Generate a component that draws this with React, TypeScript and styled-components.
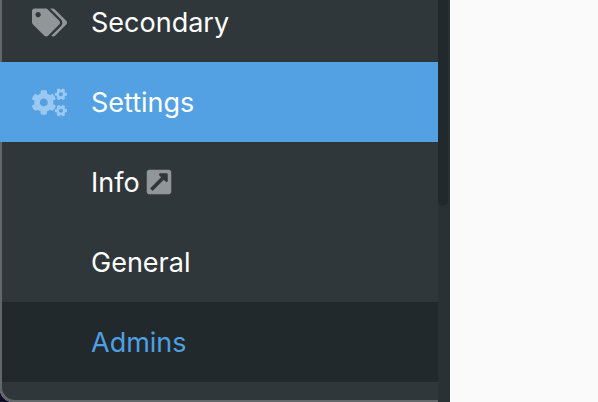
import React from 'react';
import styled, { createGlobalStyle } from 'styled-components';
import { FaTags, FaCogs, FaExternalLinkSquareAlt } from 'react-icons/fa';

const GlobalStyle = createGlobalStyle`
    html, body {
        margin: 0;
        padding: 0;
        width: 598px;
        height: 402px;
        overflow: hidden;
        background: #0d0d24;
    }
`;

const Window = styled.div`
    display: flex;
    width: 598px;
    height: 402px;
    overflow: hidden;
    border-bottom-left-radius: 13px;
    background: #fafafa;
    font-family: Inter, 'Liberation Sans', sans-serif;
`;

const Sidebar = styled.aside`
    display: flex;
    flex: 0 0 450px;
    height: 402px;
    overflow: hidden;
    background: #30373b;
    box-shadow: inset 2px -2px 0 #62676a;
    border-bottom-left-radius: 13px;
`;

const Menu = styled.ul`
    flex: 1;
    margin: -18px 0 0;
    padding: 0;
    list-style: none;
`;

const Item = styled.li<{ $state?: 'active' | 'current' }>`
    display: flex;
    align-items: center;
    height: 80px;
    margin-left: ${({ $state }) => ($state === 'active' ? '0' : '2px')};
    padding-left: ${({ $state }) => ($state === 'active' ? '32px' : '30px')};
    box-sizing: border-box;
    font-size: 27px;
    color: ${({ $state }) => ($state === 'current' ? '#4fa0e2' : '#fff')};
    background: ${({ $state }) =>
        $state === 'active' ? '#53a1e2' : $state === 'current' ? '#22292d' : 'transparent'};
`;

const IconSlot = styled.span<{ $tint?: string }>`
    display: flex;
    flex: 0 0 59px;
    color: ${({ $tint }) => $tint ?? 'inherit'};
`;

const LinkMark = styled.span`
    display: flex;
    margin-left: 5px;
    color: #919699;
`;

const Track = styled.div`
    flex: 0 0 12px;
    background: #2a3135;
`;

const Thumb = styled.div`
    height: 206px;
    width: 10px;
    background: #22292d;
    border-radius: 0 0 6px 6px;
`;

const Content = styled.main`
    flex: 1;
    background: #fafafa;
`;

const App = () => (
    <>
        <GlobalStyle />
        <Window>
            <Sidebar>
                <Menu>
                    <Item>
                        <IconSlot $tint="#919699">
                            <FaTags size={35} />
                        </IconSlot>
                        Secondary
                    </Item>
                    <Item $state="active">
                        <IconSlot $tint="#9ac8f0">
                            <FaCogs size={35} />
                        </IconSlot>
                        Settings
                    </Item>
                    <Item>
                        <IconSlot />
                        Info
                        <LinkMark>
                            <FaExternalLinkSquareAlt size={28} />
                        </LinkMark>
                    </Item>
                    <Item>
                        <IconSlot />
                        General
                    </Item>
                    <Item $state="current">
                        <IconSlot />
                        Admins
                    </Item>
                </Menu>
                <Track>
                    <Thumb />
                </Track>
            </Sidebar>
            <Content />
        </Window>
    </>
);

export default App;
